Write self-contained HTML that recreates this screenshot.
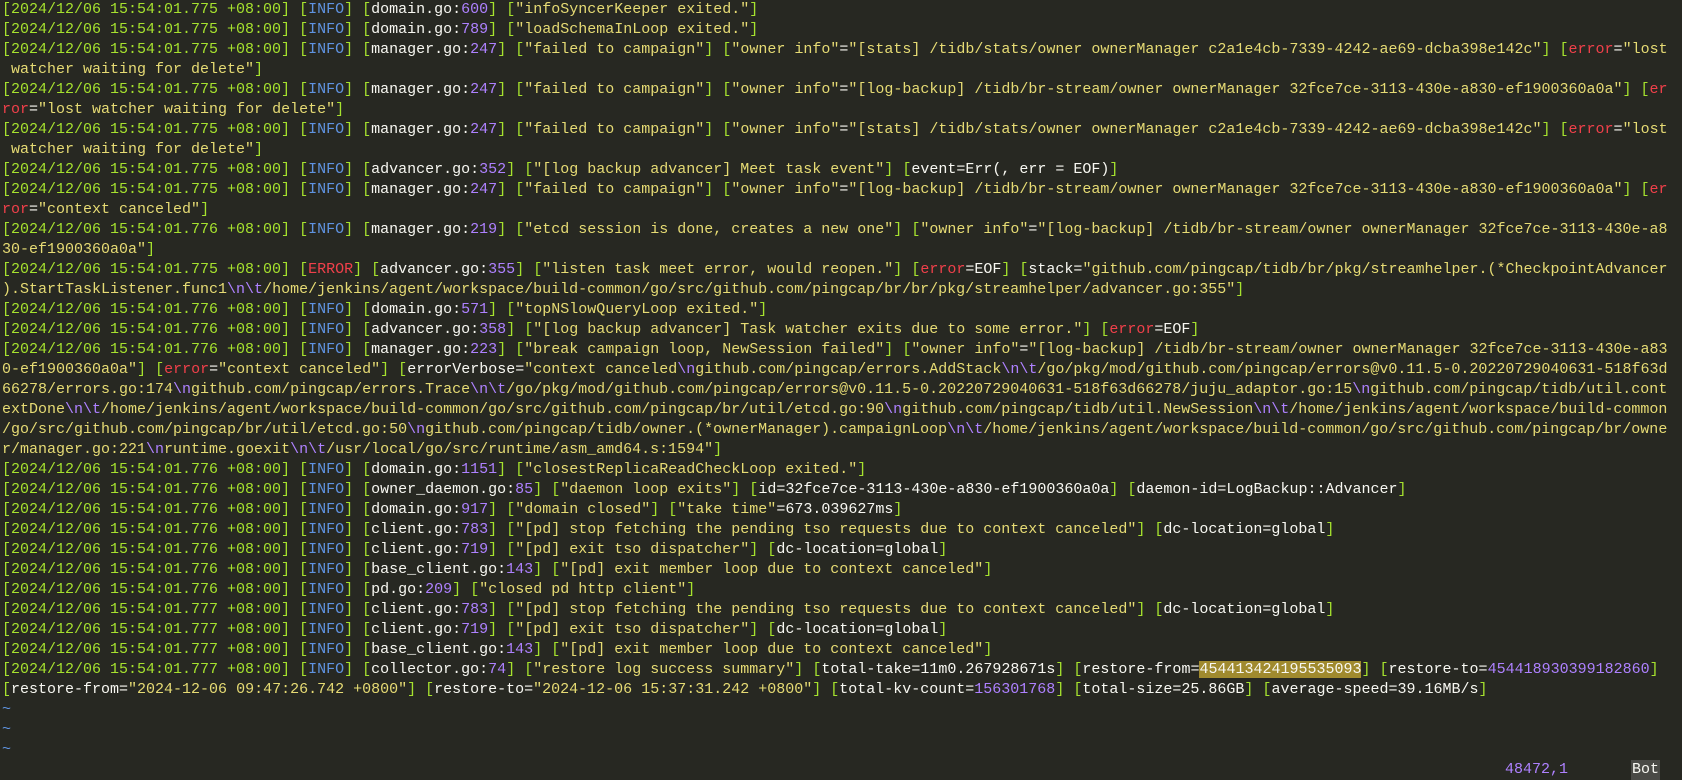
<!DOCTYPE html>
<html><head><meta charset="utf-8">
<style>
html,body{margin:0;padding:0;background:#272822;width:1682px;height:780px;overflow:hidden}
pre{margin:0;padding:0 0 0 2px;font-family:"Liberation Mono",monospace;font-size:15px;line-height:20px;color:#e6db74;white-space:pre}
i{font-style:normal}
.g{color:#a6e22e}.b{color:#5f93e0}.w{color:#f8f8f2}.p{color:#ae81ff}.r{color:#f0404a}
.hl{background:#a08a2e;color:#f8f8f2}
.st{position:absolute;top:760px;left:0;font-family:"Liberation Mono",monospace;font-size:15px;line-height:20px}
</style></head><body>
<pre><i class=g>[2024/12/06 15:54:01.775 +08:00]</i> <i class=g>[</i><i class=b>INFO</i><i class=g>]</i> <i class=g>[</i><i class=w>domain.go:</i><i class=p>600</i><i class=g>]</i> <i class=g>[</i>"infoSyncerKeeper exited."<i class=g>]</i>
<i class=g>[2024/12/06 15:54:01.775 +08:00]</i> <i class=g>[</i><i class=b>INFO</i><i class=g>]</i> <i class=g>[</i><i class=w>domain.go:</i><i class=p>789</i><i class=g>]</i> <i class=g>[</i>"loadSchemaInLoop exited."<i class=g>]</i>
<i class=g>[2024/12/06 15:54:01.775 +08:00]</i> <i class=g>[</i><i class=b>INFO</i><i class=g>]</i> <i class=g>[</i><i class=w>manager.go:</i><i class=p>247</i><i class=g>]</i> <i class=g>[</i>"failed to campaign"<i class=g>]</i> <i class=g>[</i>"owner info"<i class=w>=</i>"[stats] /tidb/stats/owner ownerManager c2a1e4cb-7339-4242-ae69-dcba398e142c"<i class=g>]</i> <i class=g>[</i><i class=r>error</i><i class=w>=</i>"lost
 watcher waiting for delete"<i class=g>]</i>
<i class=g>[2024/12/06 15:54:01.775 +08:00]</i> <i class=g>[</i><i class=b>INFO</i><i class=g>]</i> <i class=g>[</i><i class=w>manager.go:</i><i class=p>247</i><i class=g>]</i> <i class=g>[</i>"failed to campaign"<i class=g>]</i> <i class=g>[</i>"owner info"<i class=w>=</i>"[log-backup] /tidb/br-stream/owner ownerManager 32fce7ce-3113-430e-a830-ef1900360a0a"<i class=g>]</i> <i class=g>[</i><i class=r>er</i>
<i class=r>ror</i><i class=w>=</i>"lost watcher waiting for delete"<i class=g>]</i>
<i class=g>[2024/12/06 15:54:01.775 +08:00]</i> <i class=g>[</i><i class=b>INFO</i><i class=g>]</i> <i class=g>[</i><i class=w>manager.go:</i><i class=p>247</i><i class=g>]</i> <i class=g>[</i>"failed to campaign"<i class=g>]</i> <i class=g>[</i>"owner info"<i class=w>=</i>"[stats] /tidb/stats/owner ownerManager c2a1e4cb-7339-4242-ae69-dcba398e142c"<i class=g>]</i> <i class=g>[</i><i class=r>error</i><i class=w>=</i>"lost
 watcher waiting for delete"<i class=g>]</i>
<i class=g>[2024/12/06 15:54:01.775 +08:00]</i> <i class=g>[</i><i class=b>INFO</i><i class=g>]</i> <i class=g>[</i><i class=w>advancer.go:</i><i class=p>352</i><i class=g>]</i> <i class=g>[</i>"[log backup advancer] Meet task event"<i class=g>]</i> <i class=g>[</i><i class=w>event=Err(, err = EOF)</i><i class=g>]</i>
<i class=g>[2024/12/06 15:54:01.775 +08:00]</i> <i class=g>[</i><i class=b>INFO</i><i class=g>]</i> <i class=g>[</i><i class=w>manager.go:</i><i class=p>247</i><i class=g>]</i> <i class=g>[</i>"failed to campaign"<i class=g>]</i> <i class=g>[</i>"owner info"<i class=w>=</i>"[log-backup] /tidb/br-stream/owner ownerManager 32fce7ce-3113-430e-a830-ef1900360a0a"<i class=g>]</i> <i class=g>[</i><i class=r>er</i>
<i class=r>ror</i><i class=w>=</i>"context canceled"<i class=g>]</i>
<i class=g>[2024/12/06 15:54:01.776 +08:00]</i> <i class=g>[</i><i class=b>INFO</i><i class=g>]</i> <i class=g>[</i><i class=w>manager.go:</i><i class=p>219</i><i class=g>]</i> <i class=g>[</i>"etcd session is done, creates a new one"<i class=g>]</i> <i class=g>[</i>"owner info"<i class=w>=</i>"[log-backup] /tidb/br-stream/owner ownerManager 32fce7ce-3113-430e-a8
30-ef1900360a0a"<i class=g>]</i>
<i class=g>[2024/12/06 15:54:01.775 +08:00]</i> <i class=g>[</i><i class=r>ERROR</i><i class=g>]</i> <i class=g>[</i><i class=w>advancer.go:</i><i class=p>355</i><i class=g>]</i> <i class=g>[</i>"listen task meet error, would reopen."<i class=g>]</i> <i class=g>[</i><i class=r>error</i><i class=w>=EOF</i><i class=g>]</i> <i class=g>[</i><i class=w>stack=</i>"github.com/pingcap/tidb/br/pkg/streamhelper.(*CheckpointAdvancer
).StartTaskListener.func1<i class=p>\n\t</i>/home/jenkins/agent/workspace/build-common/go/src/github.com/pingcap/br/br/pkg/streamhelper/advancer.go:355"<i class=g>]</i>
<i class=g>[2024/12/06 15:54:01.776 +08:00]</i> <i class=g>[</i><i class=b>INFO</i><i class=g>]</i> <i class=g>[</i><i class=w>domain.go:</i><i class=p>571</i><i class=g>]</i> <i class=g>[</i>"topNSlowQueryLoop exited."<i class=g>]</i>
<i class=g>[2024/12/06 15:54:01.776 +08:00]</i> <i class=g>[</i><i class=b>INFO</i><i class=g>]</i> <i class=g>[</i><i class=w>advancer.go:</i><i class=p>358</i><i class=g>]</i> <i class=g>[</i>"[log backup advancer] Task watcher exits due to some error."<i class=g>]</i> <i class=g>[</i><i class=r>error</i><i class=w>=EOF</i><i class=g>]</i>
<i class=g>[2024/12/06 15:54:01.776 +08:00]</i> <i class=g>[</i><i class=b>INFO</i><i class=g>]</i> <i class=g>[</i><i class=w>manager.go:</i><i class=p>223</i><i class=g>]</i> <i class=g>[</i>"break campaign loop, NewSession failed"<i class=g>]</i> <i class=g>[</i>"owner info"<i class=w>=</i>"[log-backup] /tidb/br-stream/owner ownerManager 32fce7ce-3113-430e-a83
0-ef1900360a0a"<i class=g>]</i> <i class=g>[</i><i class=r>error</i><i class=w>=</i>"context canceled"<i class=g>]</i> <i class=g>[</i><i class=w>errorVerbose=</i>"context canceled<i class=p>\n</i>github.com/pingcap/errors.AddStack<i class=p>\n\t</i>/go/pkg/mod/github.com/pingcap/errors@v0.11.5-0.20220729040631-518f63d
66278/errors.go:174<i class=p>\n</i>github.com/pingcap/errors.Trace<i class=p>\n\t</i>/go/pkg/mod/github.com/pingcap/errors@v0.11.5-0.20220729040631-518f63d66278/juju_adaptor.go:15<i class=p>\n</i>github.com/pingcap/tidb/util.cont
extDone<i class=p>\n\t</i>/home/jenkins/agent/workspace/build-common/go/src/github.com/pingcap/br/util/etcd.go:90<i class=p>\n</i>github.com/pingcap/tidb/util.NewSession<i class=p>\n\t</i>/home/jenkins/agent/workspace/build-common
/go/src/github.com/pingcap/br/util/etcd.go:50<i class=p>\n</i>github.com/pingcap/tidb/owner.(*ownerManager).campaignLoop<i class=p>\n\t</i>/home/jenkins/agent/workspace/build-common/go/src/github.com/pingcap/br/owne
r/manager.go:221<i class=p>\n</i>runtime.goexit<i class=p>\n\t</i>/usr/local/go/src/runtime/asm_amd64.s:1594"<i class=g>]</i>
<i class=g>[2024/12/06 15:54:01.776 +08:00]</i> <i class=g>[</i><i class=b>INFO</i><i class=g>]</i> <i class=g>[</i><i class=w>domain.go:</i><i class=p>1151</i><i class=g>]</i> <i class=g>[</i>"closestReplicaReadCheckLoop exited."<i class=g>]</i>
<i class=g>[2024/12/06 15:54:01.776 +08:00]</i> <i class=g>[</i><i class=b>INFO</i><i class=g>]</i> <i class=g>[</i><i class=w>owner_daemon.go:</i><i class=p>85</i><i class=g>]</i> <i class=g>[</i>"daemon loop exits"<i class=g>]</i> <i class=g>[</i><i class=w>id=32fce7ce-3113-430e-a830-ef1900360a0a</i><i class=g>]</i> <i class=g>[</i><i class=w>daemon-id=LogBackup::Advancer</i><i class=g>]</i>
<i class=g>[2024/12/06 15:54:01.776 +08:00]</i> <i class=g>[</i><i class=b>INFO</i><i class=g>]</i> <i class=g>[</i><i class=w>domain.go:</i><i class=p>917</i><i class=g>]</i> <i class=g>[</i>"domain closed"<i class=g>]</i> <i class=g>[</i>"take time"<i class=w>=673.039627ms</i><i class=g>]</i>
<i class=g>[2024/12/06 15:54:01.776 +08:00]</i> <i class=g>[</i><i class=b>INFO</i><i class=g>]</i> <i class=g>[</i><i class=w>client.go:</i><i class=p>783</i><i class=g>]</i> <i class=g>[</i>"[pd] stop fetching the pending tso requests due to context canceled"<i class=g>]</i> <i class=g>[</i><i class=w>dc-location=global</i><i class=g>]</i>
<i class=g>[2024/12/06 15:54:01.776 +08:00]</i> <i class=g>[</i><i class=b>INFO</i><i class=g>]</i> <i class=g>[</i><i class=w>client.go:</i><i class=p>719</i><i class=g>]</i> <i class=g>[</i>"[pd] exit tso dispatcher"<i class=g>]</i> <i class=g>[</i><i class=w>dc-location=global</i><i class=g>]</i>
<i class=g>[2024/12/06 15:54:01.776 +08:00]</i> <i class=g>[</i><i class=b>INFO</i><i class=g>]</i> <i class=g>[</i><i class=w>base_client.go:</i><i class=p>143</i><i class=g>]</i> <i class=g>[</i>"[pd] exit member loop due to context canceled"<i class=g>]</i>
<i class=g>[2024/12/06 15:54:01.776 +08:00]</i> <i class=g>[</i><i class=b>INFO</i><i class=g>]</i> <i class=g>[</i><i class=w>pd.go:</i><i class=p>209</i><i class=g>]</i> <i class=g>[</i>"closed pd http client"<i class=g>]</i>
<i class=g>[2024/12/06 15:54:01.777 +08:00]</i> <i class=g>[</i><i class=b>INFO</i><i class=g>]</i> <i class=g>[</i><i class=w>client.go:</i><i class=p>783</i><i class=g>]</i> <i class=g>[</i>"[pd] stop fetching the pending tso requests due to context canceled"<i class=g>]</i> <i class=g>[</i><i class=w>dc-location=global</i><i class=g>]</i>
<i class=g>[2024/12/06 15:54:01.777 +08:00]</i> <i class=g>[</i><i class=b>INFO</i><i class=g>]</i> <i class=g>[</i><i class=w>client.go:</i><i class=p>719</i><i class=g>]</i> <i class=g>[</i>"[pd] exit tso dispatcher"<i class=g>]</i> <i class=g>[</i><i class=w>dc-location=global</i><i class=g>]</i>
<i class=g>[2024/12/06 15:54:01.777 +08:00]</i> <i class=g>[</i><i class=b>INFO</i><i class=g>]</i> <i class=g>[</i><i class=w>base_client.go:</i><i class=p>143</i><i class=g>]</i> <i class=g>[</i>"[pd] exit member loop due to context canceled"<i class=g>]</i>
<i class=g>[2024/12/06 15:54:01.777 +08:00]</i> <i class=g>[</i><i class=b>INFO</i><i class=g>]</i> <i class=g>[</i><i class=w>collector.go:</i><i class=p>74</i><i class=g>]</i> <i class=g>[</i>"restore log success summary"<i class=g>]</i> <i class=g>[</i><i class=w>total-take=11m0.267928671s</i><i class=g>]</i> <i class=g>[</i><i class=w>restore-from=</i><i class=hl>454413424195535093</i><i class=g>]</i> <i class=g>[</i><i class=w>restore-to=</i><i class=p>454418930399182860</i><i class=g>]</i>
<i class=g>[</i><i class=w>restore-from=</i>"2024-12-06 09:47:26.742 +0800"<i class=g>]</i> <i class=g>[</i><i class=w>restore-to=</i>"2024-12-06 15:37:31.242 +0800"<i class=g>]</i> <i class=g>[</i><i class=w>total-kv-count=</i><i class=p>156301768</i><i class=g>]</i> <i class=g>[</i><i class=w>total-size=25.86GB</i><i class=g>]</i> <i class=g>[</i><i class=w>average-speed=39.16MB/s</i><i class=g>]</i>
<i class=b>~</i>
<i class=b>~</i>
<i class=b>~</i></pre>
<div class="st" style="left:1505px;color:#ae81ff">48472,1</div>
<div class="st" style="left:1631px;color:#f8f8f2;background:#4a4a46;padding:0 1px">Bot</div>
</body></html>
